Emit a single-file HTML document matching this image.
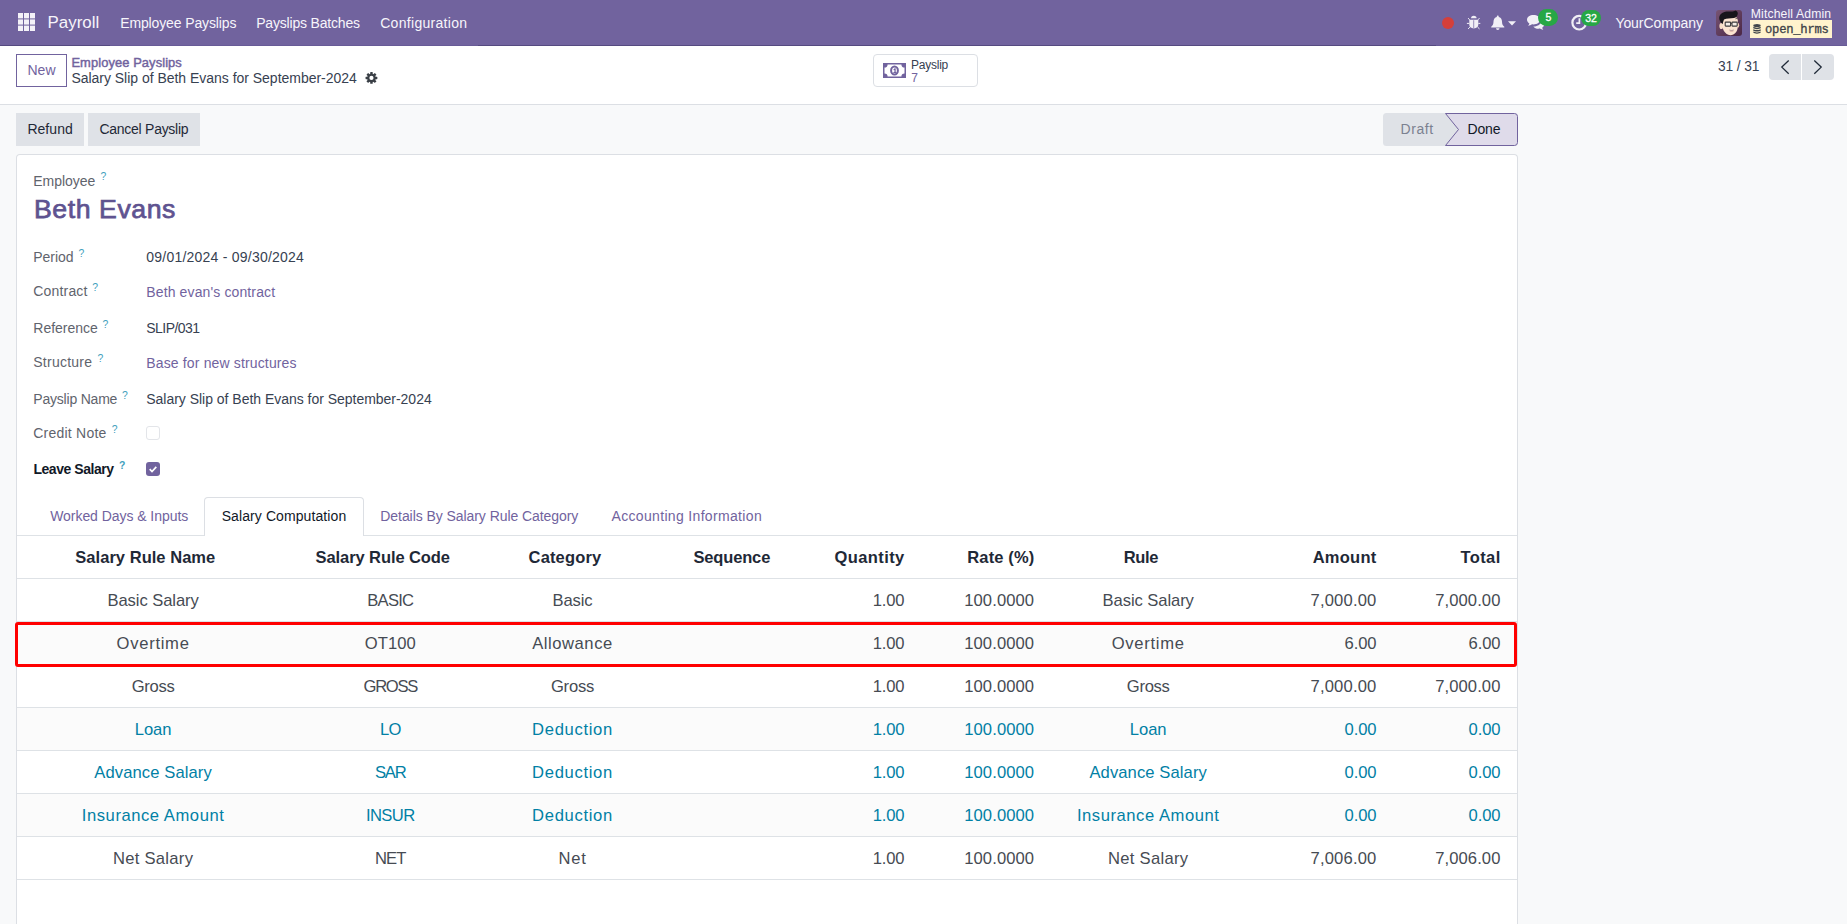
<!DOCTYPE html>
<html lang="en">
<head>
<meta charset="utf-8">
<title>Odoo - Salary Slip of Beth Evans for September-2024</title>
<style>
html,body{margin:0;padding:0;}
html{width:1847px;height:924px;overflow:hidden;}
body{width:1847px;height:924px;overflow:hidden;background:#f8f9fa;font-family:"Liberation Sans",sans-serif;position:relative;}
.abs,.t,svg.i{position:absolute;}
.t{white-space:pre;line-height:1;display:block;}
.navbar{left:0;top:0;width:1847px;height:45px;background:#71639e;border-bottom:1px solid #685b97;}
.navline{top:45px;height:1px;background:#554a80;}
.cp{left:0;top:46px;width:1847px;height:58px;background:#fff;border-bottom:1px solid #dcdfe4;}
.btn-new{left:16px;top:54px;width:49px;height:31px;border:1px solid #71639e;background:#fff;}
.stat{left:873px;top:54px;width:103px;height:31px;border:1px solid #dcdfe4;border-radius:4px;background:#fff;}
.pg{top:54px;width:32px;height:26px;background:#dfe2e7;}
.btn2{top:113px;height:33px;background:#dfe2e7;}
.sheet{left:16px;top:154px;width:1500px;height:769px;background:#fff;border:1px solid #dcdfe4;border-bottom:0;border-radius:4px 4px 0 0;}
.cb{left:146px;width:12px;height:12px;border:1px solid #e3e5e9;border-radius:3px;background:#fff;}
.cbc{left:146px;width:14px;height:14px;border-radius:3px;background:#71639e;}
.hl{left:17px;width:1500px;height:1px;background:#dee2e6;}
.stripe{left:17px;width:1500px;height:42px;background:#fbfbfb;}
.tab{left:204px;top:497px;width:158px;height:38px;border:1px solid #dcdfe4;border-bottom:0;border-radius:4px 4px 0 0;background:#fff;}
.red{left:14.5px;top:621.5px;width:1496px;height:39px;border:3px solid #ff0000;border-radius:3px;}
</style>
</head>
<body>
<!-- ======= top navigation bar ======= -->
<div class="abs navbar"></div>
<div class="abs navline" style="left:0;width:110px"></div>
<div class="abs navline" style="left:478px;width:958px"></div>
<svg class="i" style="left:18px;top:13px" width="17" height="18" viewBox="0 0 17 18" shape-rendering="geometricPrecision">
 <g fill="#f4f2f8" opacity=".33"><rect x="0" y="0" width="5" height="18"/><rect x="6" y="0" width="5" height="18"/><rect x="12" y="0" width="5" height="18"/></g>
 <g fill="#f4f2f8">
 <rect x="0" y="0" width="5" height="5.1"/><rect x="6" y="0" width="5" height="5.1"/><rect x="12" y="0" width="5" height="5.1"/>
 <rect x="0" y="6.6" width="5" height="4.8"/><rect x="6" y="6.6" width="5" height="4.8"/><rect x="12" y="6.6" width="5" height="4.8"/>
 <rect x="0" y="12.9" width="5" height="5.1"/><rect x="6" y="12.9" width="5" height="5.1"/><rect x="12" y="12.9" width="5" height="5.1"/>
 </g>
</svg>
<!-- systray -->
<div class="abs" style="left:1442px;top:17px;width:12px;height:12px;border-radius:50%;background:#d43f3a"></div>
<!-- bug -->
<svg class="i" style="left:1466px;top:15px" width="16" height="15" viewBox="0 0 16 15">
 <path d="M5 3.300a2.800 2.500 0 0 1 5.600 0z" fill="#f1eff6"/>
 <path d="M3.300 5.500Q3.300 4.700 4.100 4.700H11.500Q12.300 4.700 12.300 5.500V9.600Q12.300 13.400 7.800 13.400Q3.300 13.400 3.300 9.600z" fill="#f1eff6"/>
 <path d="M7.700 5.200V13.300" stroke="#71639e" stroke-width=".7" fill="none"/>
 <path d="M.9 8.400H3.300M12.300 8.400H14.300M3.700 4.900L2.100 3.100M11.900 4.900l1.600-1.800M3.900 12.200L2.100 13.900M11.700 12.200l1.800 1.700" stroke="#f1eff6" stroke-width="1" fill="none"/>
</svg>
<!-- bell -->
<svg class="i" style="left:1490px;top:15px" width="16" height="16" viewBox="0 0 16 16">
 <path fill="#f1eff6" d="M7.7 .6c.6 0 1 .4 1 1v.5c2 .5 3.300 2.200 3.300 4.500 0 2.700 .8 4 2.300 5.200v.7H1.200v-.7C2.700 10.600 3.500 9.300 3.500 6.600c0-2.300 1.300-4 3.300-4.500v-.5c0-.6 .4-1 .9-1zM6 13.200h3.500a1.750 1.750 0 0 1-3.500 0z"/>
</svg>
<svg class="i" style="left:1508px;top:20.500px" width="8" height="5" viewBox="0 0 8 5"><path fill="#f1eff6" d="M0 .2h8L4 4.600z"/></svg>
<!-- chat -->
<svg class="i" style="left:1526px;top:14px" width="20" height="17" viewBox="0 0 20 17">
 <g fill="#f1eff6">
  <path d="M7.500 1C3.900 1 1 3.100 1 5.700c0 1.500 .9 2.800 2.400 3.700-.2 .9-.7 1.700-1.400 2.400 1.600-.1 3-.7 4-1.500 .5 .1 1 .1 1.500 .1 3.600 0 6.500-2.100 6.500-4.700S11.100 1 7.500 1z"/>
  <path d="M15.300 6.900c1.700 .8 2.900 2.100 2.900 3.700 0 1.300-.8 2.400-2 3.200 .2 .8 .6 1.500 1.200 2.100-1.400-.1-2.600-.6-3.500-1.300-.4 .1-.9 .1-1.300 .1-2.300 0-4.300-.9-5.200-2.300 4.300 .1 7.700-2.300 7.900-5.500z"/>
 </g>
</svg>
<div class="abs" style="left:1538.200px;top:9px;width:19.400px;height:17.400px;border-radius:9px;background:#27a745"></div>
<!-- clock -->
<svg class="i" style="left:1570px;top:13px" width="19" height="19" viewBox="0 0 19 19">
 <circle cx="9.200" cy="9.700" r="6.800" fill="none" stroke="#f1eff6" stroke-width="2.200"/>
 <path d="M9.400 5.200v4.900H6.200" fill="none" stroke="#f1eff6" stroke-width="1.700"/>
</svg>
<div class="abs" style="left:1581.200px;top:9.800px;width:20.200px;height:16.600px;border-radius:8.500px;background:#27a745"></div>
<!-- avatar -->
<svg class="i" style="left:1716px;top:10px" width="26" height="26" viewBox="0 0 26 26">
 <defs><linearGradient id="av" x1="0" y1="0" x2="1" y2="1"><stop offset="0" stop-color="#775473"/><stop offset="1" stop-color="#4b2745"/></linearGradient></defs>
 <rect width="26" height="26" rx="3" fill="url(#av)"/>
 <ellipse cx="5.300" cy="16" rx="1.900" ry="3.100" fill="#f6dcc8"/>
 <ellipse cx="22" cy="15.300" rx="1.200" ry="2.400" fill="#f0cdb6"/>
 <path d="M6.600 9.500C6.600 6.500 10 5.500 14.300 5.500s7.500 1.500 7.500 5v6c0 5-3.500 8.700-7.300 8.700S6.600 21 6.600 16.500z" fill="#fbe3d0"/>
 <path d="M6.600 14C4.200 12.500 2.600 9 3.500 6.300 4.500 3 8.500 1.200 12.500 1.400c3 .1 5.500 .3 7-1 1.200 .3 2.400 1.500 2.300 3.100-.1 2.300-1.500 4.100-3.800 4.500-3.500 .6-7.500 .2-10 1.500-.7 1.500-.9 3-1.400 4.500z" fill="#17151a"/>
 <path d="M19.500 8.800c.7-.4 1.500-.4 2.100 0" stroke="#2a2024" stroke-width=".8" fill="none"/>
 <rect x="9.200" y="12.100" width="5.400" height="4" rx=".6" fill="#f4ece6" stroke="#3b3a3c" stroke-width="1.100"/>
 <rect x="16" y="12.100" width="5.200" height="4" rx=".6" fill="#f4ece6" stroke="#3b3a3c" stroke-width="1.100"/>
 <path d="M14.600 13.300h1.400" stroke="#3b3a3c" stroke-width="1"/>
 <path d="M13 19.300c1.500 .9 3.600 .9 5.100 -.1-.3 1.300-1.400 1.900-2.600 1.900s-2.200-.6-2.500-1.800z" fill="#b9a9a8"/>
 <path d="M13.600 20.800c1.200 .6 2.800 .6 3.900 0" stroke="#c98f88" stroke-width=".7" fill="none"/>
</svg>
<!-- db badge -->
<div class="abs" style="left:1750px;top:20px;width:82px;height:18px;background:#fff3cd"></div>
<svg class="i" style="left:1752.500px;top:24px" width="8" height="10" viewBox="0 0 8 10">
 <g fill="#41464b"><ellipse cx="4" cy="1.600" rx="3.700" ry="1.500"/><path d="M.3 2.800c1.200 1.100 6.200 1.100 7.400 0v1.500c-1.200 1.100-6.200 1.100-7.400 0zM.3 5.200c1.200 1.100 6.200 1.100 7.400 0v1.500c-1.200 1.100-6.200 1.100-7.400 0zM.3 7.600c1.200 1.100 6.200 1.100 7.400 0v1c-1.200 1.500-6.200 1.500-7.400 0z"/></g>
</svg>

<!-- ======= control panel ======= -->
<div class="abs cp"></div>
<div class="abs btn-new"></div>
<!-- gear -->
<svg class="i" style="left:364.500px;top:72px" width="13" height="13" viewBox="0 0 13 13">
 <g transform="translate(6.450 5.950)">
  <g fill="#3a3f46">
   <rect x="-1.250" y="-5.900" width="2.500" height="11.800" rx=".4"/>
   <rect x="-1.250" y="-5.900" width="2.500" height="11.800" rx=".4" transform="rotate(45)"/>
   <rect x="-1.250" y="-5.900" width="2.500" height="11.800" rx=".4" transform="rotate(90)"/>
   <rect x="-1.250" y="-5.900" width="2.500" height="11.800" rx=".4" transform="rotate(135)"/>
   <circle r="4.300"/>
  </g>
  <circle r="2.100" fill="#fff"/>
 </g>
</svg>
<div class="abs stat"></div>
<!-- money icon -->
<svg class="i" style="left:883px;top:63px" width="23" height="15" viewBox="0 0 23 15">
 <path fill="#71639e" fill-rule="evenodd" d="M0 0h23v15H0zM4.600 1.500a3.100 3.100 0 0 1-3.100 3.100v5.800a3.100 3.100 0 0 1 3.100 3.100h13.800a3.100 3.100 0 0 1 3.100-3.100V4.600a3.100 3.100 0 0 1-3.100-3.100z"/>
 <ellipse cx="11.500" cy="7.500" rx="3.400" ry="4" fill="#fff" stroke="#71639e" stroke-width="2"/>
 <path d="M10.400 6.400l1.300-1.100h1v3.800h.7v1h-3v-1h1v-2.200l-.6 .4z" fill="#71639e"/>
</svg>
<div class="abs pg" style="left:1769px;border-radius:4px 0 0 4px"></div>
<div class="abs pg" style="left:1802px;border-radius:0 4px 4px 0"></div>
<svg class="i" style="left:1779px;top:58px" width="12" height="18" viewBox="0 0 12 18"><path d="M9.700 2.500L2.800 9.100l6.900 6.600" fill="none" stroke="#1f2937" stroke-width="1.300"/></svg>
<svg class="i" style="left:1812px;top:58px" width="12" height="18" viewBox="0 0 12 18"><path d="M2.300 2.500l6.900 6.600-6.900 6.600" fill="none" stroke="#1f2937" stroke-width="1.300"/></svg>

<!-- ======= status bar / buttons ======= -->
<div class="abs btn2" style="left:16px;width:68px"></div>
<div class="abs btn2" style="left:88px;width:112px"></div>
<svg class="i" style="left:1383px;top:113px" width="136" height="33" viewBox="0 0 136 33">
 <path d="M3.500 0H77V33H3.500a3.500 3.500 0 0 1-3.500-3.500V3.500a3.500 3.500 0 0 1 3.500-3.500z" fill="#dfe2e7"/>
 <path d="M62.500 .5H131.500a3 3 0 0 1 3 3v26a3 3 0 0 1-3 3H62.500L75.500 16.500z" fill="#dfdbea" stroke="#71639e" stroke-width="1"/>
</svg>

<!-- ======= form sheet ======= -->
<div class="abs sheet"></div>
<div class="abs cb" style="top:426px"></div>
<div class="abs cbc" style="top:462px"></div>
<svg class="i" style="left:146px;top:462px" width="14" height="14" viewBox="0 0 14 14"><path d="M3.700 7.200l2.300 2.300 4.300-4.600" fill="none" stroke="#fff" stroke-width="1.700"/></svg>

<!-- notebook tabs -->
<div class="abs hl" style="top:535px"></div>
<div class="abs tab"></div>

<!-- list -->
<div class="abs stripe" style="top:622px"></div>
<div class="abs stripe" style="top:708px"></div>
<div class="abs stripe" style="top:794px"></div>
<div class="abs hl" style="top:578px"></div>
<div class="abs hl" style="top:621px"></div>
<div class="abs hl" style="top:664px"></div>
<div class="abs hl" style="top:707px"></div>
<div class="abs hl" style="top:750px"></div>
<div class="abs hl" style="top:793px"></div>
<div class="abs hl" style="top:836px"></div>
<div class="abs hl" style="top:879px"></div>
<div class="abs red"></div>

<!-- ======= text ======= -->
<span class="t" style="left:47.50px;top:14.89px;font-size:16.9px;color:#f7f5fb;letter-spacing:0.023px;">Payroll</span>
<span class="t" style="left:120.20px;top:15.75px;font-size:14px;color:#f7f5fb;letter-spacing:-0.128px;">Employee Payslips</span>
<span class="t" style="left:256.20px;top:15.75px;font-size:14px;color:#f7f5fb;letter-spacing:-0.188px;">Payslips Batches</span>
<span class="t" style="left:380.20px;top:15.75px;font-size:14px;color:#f7f5fb;letter-spacing:0.301px;">Configuration</span>
<span class="t" style="left:1615.40px;top:15.75px;font-size:14px;color:#f7f5fb;letter-spacing:-0.056px;">YourCompany</span>
<span class="t" style="left:1750.80px;top:8.07px;font-size:12.2px;color:#f7f5fb;letter-spacing:0.137px;">Mitchell Admin</span>
<span class="t" style="left:1765.00px;top:24.07px;font-size:12.2px;color:#3d4248;letter-spacing:-0.248px;-webkit-text-stroke:0.3px #3d4248;font-family:'Liberation Mono',monospace;">open_hrms</span>
<span class="t" style="left:1545.50px;top:11.81px;font-size:10.5px;color:#ffffff;letter-spacing:-0.144px;-webkit-text-stroke:0.3px #ffffff;">5</span>
<span class="t" style="left:1585.20px;top:12.71px;font-size:10.5px;color:#ffffff;letter-spacing:0.006px;-webkit-text-stroke:0.3px #ffffff;">32</span>
<span class="t" style="left:27.40px;top:63.15px;font-size:14px;color:#71639e;letter-spacing:0.061px;">New</span>
<span class="t" style="left:71.40px;top:57.08px;font-size:12.9px;color:#71639e;letter-spacing:0.094px;-webkit-text-stroke:0.45px #71639e;">Employee Payslips</span>
<span class="t" style="left:71.40px;top:70.95px;font-size:14px;color:#374151;letter-spacing:-0.023px;">Salary Slip of Beth Evans for September-2024</span>
<span class="t" style="left:911.00px;top:58.84px;font-size:12px;color:#374151;letter-spacing:-0.241px;">Payslip</span>
<span class="t" style="left:911.20px;top:71.54px;font-size:12px;color:#71639e;letter-spacing:-1.487px;">7</span>
<span class="t" style="left:1717.90px;top:60.22px;font-size:13.8px;color:#374151;letter-spacing:-0.115px;">31 / 31</span>
<span class="t" style="left:27.40px;top:121.95px;font-size:14px;color:#1f2937;letter-spacing:0.041px;">Refund</span>
<span class="t" style="left:99.50px;top:121.95px;font-size:14px;color:#1f2937;letter-spacing:-0.272px;">Cancel Payslip</span>
<span class="t" style="left:1400.60px;top:122.05px;font-size:14px;color:#7b8190;letter-spacing:0.571px;">Draft</span>
<span class="t" style="left:1467.40px;top:122.05px;font-size:14px;color:#111827;letter-spacing:-0.092px;">Done</span>
<span class="t" style="left:33.30px;top:174.15px;font-size:14px;color:#5f646d;letter-spacing:-0.046px;">Employee</span>
<span class="t" style="left:100.40px;top:172.40px;font-size:10.4px;color:#3fa0bd;letter-spacing:-1.981px;">?</span>
<span class="t" style="left:34.00px;top:196.00px;font-size:26.7px;color:#5f5390;letter-spacing:0.550px;-webkit-text-stroke:0.75px #5f5390;">Beth Evans</span>
<span class="t" style="left:33.30px;top:249.85px;font-size:14px;color:#5f646d;letter-spacing:-0.045px;">Period</span>
<span class="t" style="left:78.40px;top:248.50px;font-size:10.4px;color:#3fa0bd;letter-spacing:-1.981px;">?</span>
<span class="t" style="left:33.30px;top:284.15px;font-size:14px;color:#5f646d;letter-spacing:0.172px;">Contract</span>
<span class="t" style="left:92.20px;top:282.70px;font-size:10.4px;color:#3fa0bd;letter-spacing:-1.981px;">?</span>
<span class="t" style="left:33.30px;top:321.05px;font-size:14px;color:#5f646d;letter-spacing:-0.010px;">Reference</span>
<span class="t" style="left:102.60px;top:319.70px;font-size:10.4px;color:#3fa0bd;letter-spacing:-1.981px;">?</span>
<span class="t" style="left:33.30px;top:354.95px;font-size:14px;color:#5f646d;letter-spacing:0.232px;">Structure</span>
<span class="t" style="left:97.40px;top:353.70px;font-size:10.4px;color:#3fa0bd;letter-spacing:-1.981px;">?</span>
<span class="t" style="left:33.30px;top:391.95px;font-size:14px;color:#5f646d;letter-spacing:-0.206px;">Payslip Name</span>
<span class="t" style="left:122.00px;top:390.70px;font-size:10.4px;color:#3fa0bd;letter-spacing:-1.981px;">?</span>
<span class="t" style="left:33.30px;top:426.05px;font-size:14px;color:#5f646d;letter-spacing:0.217px;">Credit Note</span>
<span class="t" style="left:111.80px;top:424.70px;font-size:10.4px;color:#3fa0bd;letter-spacing:-1.981px;">?</span>
<span class="t" style="left:33.40px;top:462.25px;font-size:14px;color:#111827;letter-spacing:-0.444px;font-weight:bold;">Leave Salary</span>
<span class="t" style="left:118.90px;top:460.90px;font-size:10.4px;color:#3fa0bd;letter-spacing:-2.559px;font-weight:bold;">?</span>
<span class="t" style="left:146.30px;top:250.15px;font-size:14px;color:#374151;letter-spacing:0.227px;">09/01/2024 - 09/30/2024</span>
<span class="t" style="left:146.30px;top:284.85px;font-size:14px;color:#71639e;letter-spacing:0.124px;">Beth evan's contract</span>
<span class="t" style="left:146.30px;top:321.05px;font-size:14px;color:#374151;letter-spacing:-0.539px;">SLIP/031</span>
<span class="t" style="left:146.30px;top:355.85px;font-size:14px;color:#71639e;letter-spacing:0.145px;">Base for new structures</span>
<span class="t" style="left:146.30px;top:391.95px;font-size:14px;color:#374151;letter-spacing:-0.023px;">Salary Slip of Beth Evans for September-2024</span>
<span class="t" style="left:50.20px;top:509.15px;font-size:14px;color:#71639e;letter-spacing:-0.052px;">Worked Days &amp; Inputs</span>
<span class="t" style="left:221.70px;top:509.15px;font-size:14px;color:#111827;letter-spacing:0.091px;">Salary Computation</span>
<span class="t" style="left:380.30px;top:509.15px;font-size:14px;color:#71639e;letter-spacing:-0.064px;">Details By Salary Rule Category</span>
<span class="t" style="left:611.50px;top:509.15px;font-size:14px;color:#71639e;letter-spacing:0.332px;">Accounting Information</span>
<span class="t" style="left:75.30px;top:548.93px;font-size:16.5px;color:#1f2937;letter-spacing:0.037px;font-weight:bold;">Salary Rule Name</span>
<span class="t" style="left:315.60px;top:548.93px;font-size:16.5px;color:#1f2937;letter-spacing:-0.089px;font-weight:bold;">Salary Rule Code</span>
<span class="t" style="left:528.60px;top:548.93px;font-size:16.5px;color:#1f2937;letter-spacing:0.146px;font-weight:bold;">Category</span>
<span class="t" style="left:693.40px;top:548.93px;font-size:16.5px;color:#1f2937;letter-spacing:-0.144px;font-weight:bold;">Sequence</span>
<span class="t" style="left:834.40px;top:548.93px;font-size:16.5px;color:#1f2937;letter-spacing:0.422px;font-weight:bold;">Quantity</span>
<span class="t" style="left:967.30px;top:548.93px;font-size:16.5px;color:#1f2937;letter-spacing:0.123px;font-weight:bold;">Rate (%)</span>
<span class="t" style="left:1123.70px;top:548.93px;font-size:16.5px;color:#1f2937;letter-spacing:-0.316px;font-weight:bold;">Rule</span>
<span class="t" style="left:1312.70px;top:548.93px;font-size:16.5px;color:#1f2937;letter-spacing:0.245px;font-weight:bold;">Amount</span>
<span class="t" style="left:1460.60px;top:548.93px;font-size:16.5px;color:#1f2937;letter-spacing:0.359px;font-weight:bold;">Total</span>
<span class="t" style="left:107.50px;top:592.55px;font-size:16.6px;color:#464b53;letter-spacing:-0.086px;">Basic Salary</span>
<span class="t" style="left:367.25px;top:592.55px;font-size:16.6px;color:#464b53;letter-spacing:-0.742px;">BASIC</span>
<span class="t" style="left:552.55px;top:592.55px;font-size:16.6px;color:#464b53;letter-spacing:-0.136px;">Basic</span>
<span class="t" style="left:872.80px;top:592.55px;font-size:16.6px;color:#464b53;letter-spacing:-0.199px;">1.00</span>
<span class="t" style="left:964.20px;top:592.55px;font-size:16.6px;color:#464b53;letter-spacing:0.098px;">100.0000</span>
<span class="t" style="left:1102.60px;top:592.55px;font-size:16.6px;color:#464b53;letter-spacing:-0.086px;">Basic Salary</span>
<span class="t" style="left:1310.50px;top:592.55px;font-size:16.6px;color:#464b53;letter-spacing:0.176px;">7,000.00</span>
<span class="t" style="left:1435.20px;top:592.55px;font-size:16.6px;color:#464b53;letter-spacing:0.088px;">7,000.00</span>
<span class="t" style="left:116.60px;top:635.55px;font-size:16.6px;color:#464b53;letter-spacing:0.711px;">Overtime</span>
<span class="t" style="left:364.65px;top:635.55px;font-size:16.6px;color:#464b53;letter-spacing:0.113px;">OT100</span>
<span class="t" style="left:532.25px;top:635.55px;font-size:16.6px;color:#464b53;letter-spacing:0.540px;">Allowance</span>
<span class="t" style="left:872.80px;top:635.55px;font-size:16.6px;color:#464b53;letter-spacing:-0.199px;">1.00</span>
<span class="t" style="left:964.20px;top:635.55px;font-size:16.6px;color:#464b53;letter-spacing:0.098px;">100.0000</span>
<span class="t" style="left:1111.70px;top:635.55px;font-size:16.6px;color:#464b53;letter-spacing:0.711px;">Overtime</span>
<span class="t" style="left:1344.50px;top:635.55px;font-size:16.6px;color:#464b53;letter-spacing:-0.074px;">6.00</span>
<span class="t" style="left:1468.50px;top:635.55px;font-size:16.6px;color:#464b53;letter-spacing:-0.074px;">6.00</span>
<span class="t" style="left:131.65px;top:678.55px;font-size:16.6px;color:#464b53;letter-spacing:-0.273px;">Gross</span>
<span class="t" style="left:363.50px;top:678.55px;font-size:16.6px;color:#464b53;letter-spacing:-1.267px;">GROSS</span>
<span class="t" style="left:550.90px;top:678.55px;font-size:16.6px;color:#464b53;letter-spacing:-0.213px;">Gross</span>
<span class="t" style="left:872.80px;top:678.55px;font-size:16.6px;color:#464b53;letter-spacing:-0.199px;">1.00</span>
<span class="t" style="left:964.20px;top:678.55px;font-size:16.6px;color:#464b53;letter-spacing:0.098px;">100.0000</span>
<span class="t" style="left:1126.75px;top:678.55px;font-size:16.6px;color:#464b53;letter-spacing:-0.273px;">Gross</span>
<span class="t" style="left:1310.50px;top:678.55px;font-size:16.6px;color:#464b53;letter-spacing:0.176px;">7,000.00</span>
<span class="t" style="left:1435.20px;top:678.55px;font-size:16.6px;color:#464b53;letter-spacing:0.088px;">7,000.00</span>
<span class="t" style="left:134.75px;top:721.55px;font-size:16.6px;color:#0180a5;letter-spacing:-0.055px;">Loan</span>
<span class="t" style="left:380.05px;top:721.55px;font-size:16.6px;color:#0180a5;letter-spacing:-0.820px;">LO</span>
<span class="t" style="left:532.10px;top:721.55px;font-size:16.6px;color:#0180a5;letter-spacing:0.674px;">Deduction</span>
<span class="t" style="left:872.80px;top:721.55px;font-size:16.6px;color:#0180a5;letter-spacing:-0.199px;">1.00</span>
<span class="t" style="left:964.20px;top:721.55px;font-size:16.6px;color:#0180a5;letter-spacing:0.098px;">100.0000</span>
<span class="t" style="left:1129.85px;top:721.55px;font-size:16.6px;color:#0180a5;letter-spacing:-0.055px;">Loan</span>
<span class="t" style="left:1344.50px;top:721.55px;font-size:16.6px;color:#0180a5;letter-spacing:-0.074px;">0.00</span>
<span class="t" style="left:1468.50px;top:721.55px;font-size:16.6px;color:#0180a5;letter-spacing:-0.074px;">0.00</span>
<span class="t" style="left:94.35px;top:764.55px;font-size:16.6px;color:#0180a5;letter-spacing:0.090px;">Advance Salary</span>
<span class="t" style="left:374.90px;top:764.55px;font-size:16.6px;color:#0180a5;letter-spacing:-1.108px;">SAR</span>
<span class="t" style="left:532.10px;top:764.55px;font-size:16.6px;color:#0180a5;letter-spacing:0.674px;">Deduction</span>
<span class="t" style="left:872.80px;top:764.55px;font-size:16.6px;color:#0180a5;letter-spacing:-0.199px;">1.00</span>
<span class="t" style="left:964.20px;top:764.55px;font-size:16.6px;color:#0180a5;letter-spacing:0.098px;">100.0000</span>
<span class="t" style="left:1089.45px;top:764.55px;font-size:16.6px;color:#0180a5;letter-spacing:0.090px;">Advance Salary</span>
<span class="t" style="left:1344.50px;top:764.55px;font-size:16.6px;color:#0180a5;letter-spacing:-0.074px;">0.00</span>
<span class="t" style="left:1468.50px;top:764.55px;font-size:16.6px;color:#0180a5;letter-spacing:-0.074px;">0.00</span>
<span class="t" style="left:81.85px;top:807.55px;font-size:16.6px;color:#0180a5;letter-spacing:0.546px;">Insurance Amount</span>
<span class="t" style="left:365.95px;top:807.55px;font-size:16.6px;color:#0180a5;letter-spacing:-0.588px;">INSUR</span>
<span class="t" style="left:532.10px;top:807.55px;font-size:16.6px;color:#0180a5;letter-spacing:0.674px;">Deduction</span>
<span class="t" style="left:872.80px;top:807.55px;font-size:16.6px;color:#0180a5;letter-spacing:-0.199px;">1.00</span>
<span class="t" style="left:964.20px;top:807.55px;font-size:16.6px;color:#0180a5;letter-spacing:0.098px;">100.0000</span>
<span class="t" style="left:1076.95px;top:807.55px;font-size:16.6px;color:#0180a5;letter-spacing:0.546px;">Insurance Amount</span>
<span class="t" style="left:1344.50px;top:807.55px;font-size:16.6px;color:#0180a5;letter-spacing:-0.074px;">0.00</span>
<span class="t" style="left:1468.50px;top:807.55px;font-size:16.6px;color:#0180a5;letter-spacing:-0.074px;">0.00</span>
<span class="t" style="left:113.00px;top:850.55px;font-size:16.6px;color:#464b53;letter-spacing:0.273px;">Net Salary</span>
<span class="t" style="left:374.90px;top:850.55px;font-size:16.6px;color:#464b53;letter-spacing:-0.796px;">NET</span>
<span class="t" style="left:558.40px;top:850.55px;font-size:16.6px;color:#464b53;letter-spacing:0.791px;">Net</span>
<span class="t" style="left:872.80px;top:850.55px;font-size:16.6px;color:#464b53;letter-spacing:-0.199px;">1.00</span>
<span class="t" style="left:964.20px;top:850.55px;font-size:16.6px;color:#464b53;letter-spacing:0.098px;">100.0000</span>
<span class="t" style="left:1108.10px;top:850.55px;font-size:16.6px;color:#464b53;letter-spacing:0.273px;">Net Salary</span>
<span class="t" style="left:1310.50px;top:850.55px;font-size:16.6px;color:#464b53;letter-spacing:0.176px;">7,006.00</span>
<span class="t" style="left:1435.20px;top:850.55px;font-size:16.6px;color:#464b53;letter-spacing:0.088px;">7,006.00</span>

</body></html>
